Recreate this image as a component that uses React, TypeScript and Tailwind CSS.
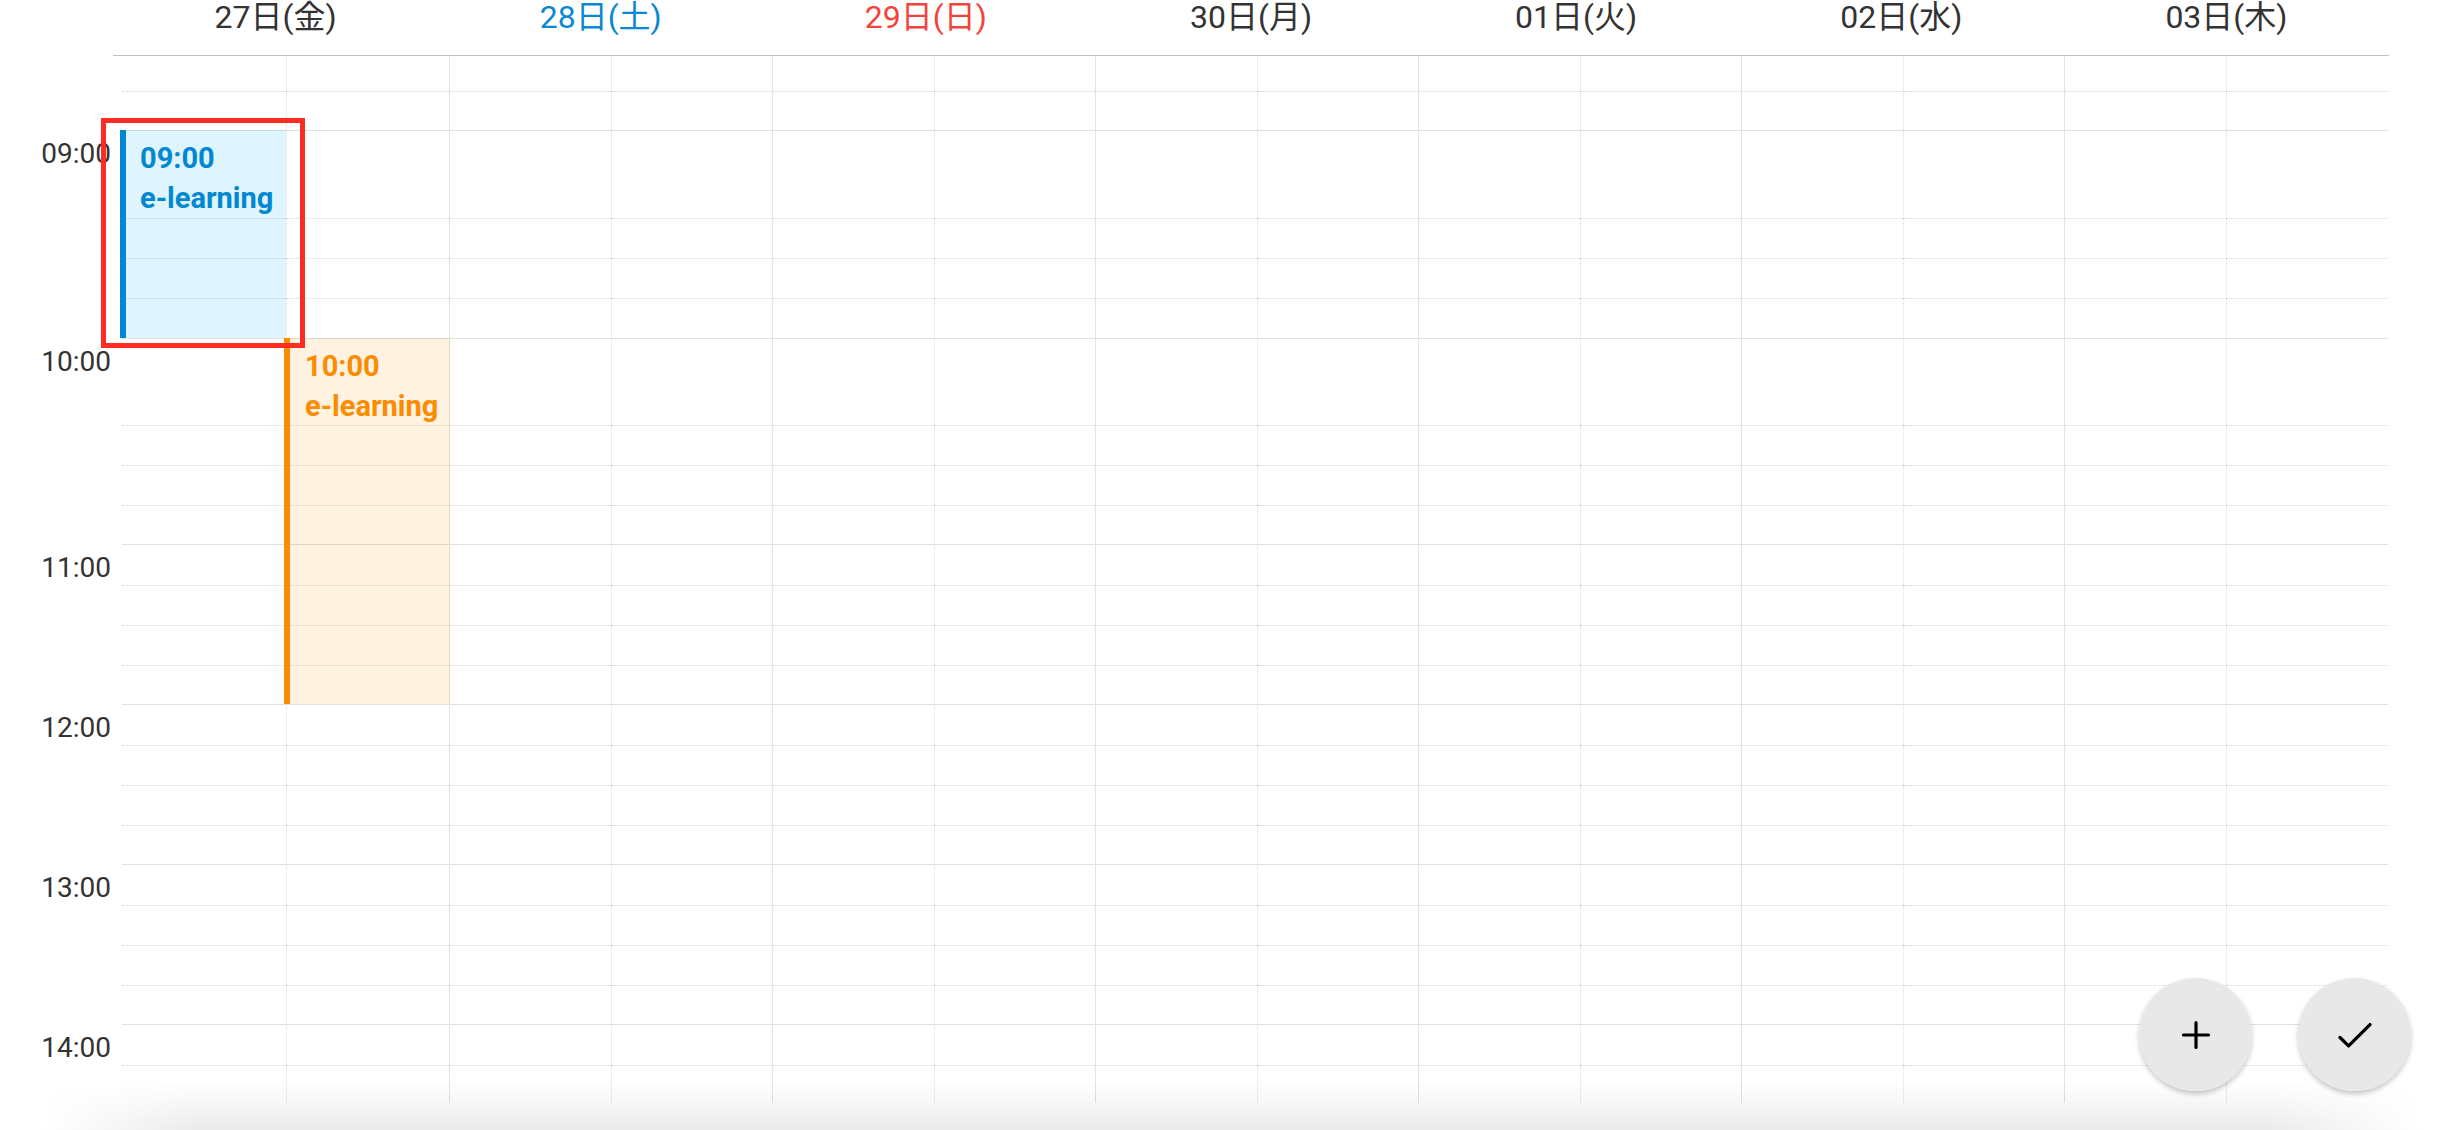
import { Fragment } from "react";
import clsx from "clsx";

type Line = "none" | "dotted" | "solid";

interface Row {
  h: string;
  line: Line;
  label?: string;
}

// rows with events get taller first quarter
const rows: Row[] = [
  { h: "h-[35px]", line: "none" },
  { h: "h-[39px]", line: "dotted" },
  { h: "h-[88px]", line: "solid", label: "09:00" },
  { h: "h-[40px]", line: "dotted" },
  { h: "h-[40px]", line: "dotted" },
  { h: "h-[40px]", line: "dotted" },
  { h: "h-[87px]", line: "solid", label: "10:00" },
  { h: "h-[40px]", line: "dotted" },
  { h: "h-[40px]", line: "dotted" },
  { h: "h-[39px]", line: "dotted" },
  { h: "h-[41px]", line: "solid", label: "11:00" },
  { h: "h-[40px]", line: "dotted" },
  { h: "h-[40px]", line: "dotted" },
  { h: "h-[39px]", line: "dotted" },
  { h: "h-[41px]", line: "solid", label: "12:00" },
  { h: "h-[40px]", line: "dotted" },
  { h: "h-[40px]", line: "dotted" },
  { h: "h-[39px]", line: "dotted" },
  { h: "h-[41px]", line: "solid", label: "13:00" },
  { h: "h-[40px]", line: "dotted" },
  { h: "h-[40px]", line: "dotted" },
  { h: "h-[39px]", line: "dotted" },
  { h: "h-[41px]", line: "solid", label: "14:00" },
  { h: "h-[40px]", line: "dotted" },
];

const days = [
  { label: "27日(金)", color: "text-[#333333]" },
  { label: "28日(土)", color: "text-[#0a88d2]" },
  { label: "29日(日)", color: "text-[#f4433a]" },
  { label: "30日(月)", color: "text-[#333333]" },
  { label: "01日(火)", color: "text-[#333333]" },
  { label: "02日(水)", color: "text-[#333333]" },
  { label: "03日(木)", color: "text-[#333333]" },
];

const halves = Array.from({ length: 14 }, (_, i) => i);

function BlueEvent() {
  return (
    <>
      <div className="absolute left-[-2px] top-0 z-10 h-[208px] w-[166px] border-l-[6px] border-[#0288d1] bg-[#03a9f4]/[0.13] pl-[14px] pt-[8px] text-[29px] font-bold leading-[40px] text-[#0288d1]">
        <div>09:00</div>
        <div>e-learning</div>
      </div>
      <div className="absolute left-[-21px] top-[-12px] z-20 h-[230px] w-[204px] border-[5px] border-[#ff2d21]" />
    </>
  );
}

function OrangeEvent() {
  return (
    <div className="absolute left-[-3px] top-0 z-10 h-[366px] w-[166px] border-l-[6px] border-[#fb8c00] bg-[#ff9800]/[0.12] pl-[15px] pt-[8px] text-[29px] font-bold leading-[40px] text-[#fb8c00]">
      <div>10:00</div>
      <div>e-learning</div>
    </div>
  );
}

function Cell({ row, rowIdx, half }: { row: Row; rowIdx: number; half: number }) {
  const isLast = half === 13;
  const right = isLast
    ? ""
    : half % 2 === 0
      ? "border-r border-dotted border-[#dcdcdc]"
      : "border-r border-[#e3e3e3]";
  const top =
    row.line === "solid"
      ? "border-t border-[#e0e0e0]"
      : row.line === "dotted"
        ? "border-t border-dotted border-[#d6d6d6]"
        : "";
  const blue = rowIdx === 2 && half === 0;
  const orange = rowIdx === 6 && half === 1;

  return (
    <div className={clsx(right, (blue || orange) && "relative")}>
      <div className={clsx("h-full", top)} />
      {blue && <BlueEvent />}
      {orange && <OrangeEvent />}
    </div>
  );
}

export default function App() {
  return (
    <div className="relative h-[1130px] w-[2464px] overflow-hidden bg-white font-[Roboto,'Noto_Sans_CJK_JP',sans-serif] text-[#333333]">
      {/* day header */}
      <div className="ml-[113px] flex h-[56px] w-[2276px] border-b border-[#c2c2c2]">
        {days.map((d) => (
          <div key={d.label} className={clsx("flex-1 text-center text-[32px] leading-[34px]", d.color)}>
            {d.label}
          </div>
        ))}
      </div>

      {/* time grid */}
      <div className="h-[1047px] overflow-hidden">
        <div className="grid w-[2388px] grid-cols-[122px_165px_163px_repeat(12,161.5px)]">
          {rows.map((row, r) => (
            <Fragment key={r}>
              <div className={clsx(row.h, "pr-[11px] pt-[10px] text-right text-[28px] leading-none text-[#333333]")}>
                {row.label}
              </div>
              {halves.map((h) => (
                <Cell key={h} row={row} rowIdx={r} half={h} />
              ))}
            </Fragment>
          ))}
        </div>
      </div>

      {/* bottom shadow */}
      <div className="pointer-events-none absolute bottom-0 left-[40px] right-[40px] h-[48px] bg-gradient-to-b from-transparent to-black/[0.08] [mask-image:linear-gradient(90deg,transparent_0,black_160px,black_calc(100%_-_160px),transparent_100%)]" />

      {/* floating buttons */}
      <div className="absolute bottom-[39px] right-[53px] flex gap-[46px]">
        <button className="flex h-[113px] w-[113px] items-center justify-center rounded-full bg-[#e6e6e6]/90 shadow-[0_3px_5px_rgba(0,0,0,0.22)]">
          <svg width="40" height="40" viewBox="0 0 40 40" fill="none" stroke="#000" strokeWidth="3.2" strokeLinecap="round">
            <path d="M7.5 20h25M20 7.5v25" />
          </svg>
        </button>
        <button className="flex h-[113px] w-[113px] items-center justify-center rounded-full bg-[#e6e6e6]/90 shadow-[0_3px_5px_rgba(0,0,0,0.22)]">
          <svg width="40" height="40" viewBox="0 0 40 40" fill="none" stroke="#000" strokeWidth="3.3" strokeLinecap="round" strokeLinejoin="round">
            <path d="M5 22.5l8.6 8.4L35 9.6" />
          </svg>
        </button>
      </div>
    </div>
  );
}
